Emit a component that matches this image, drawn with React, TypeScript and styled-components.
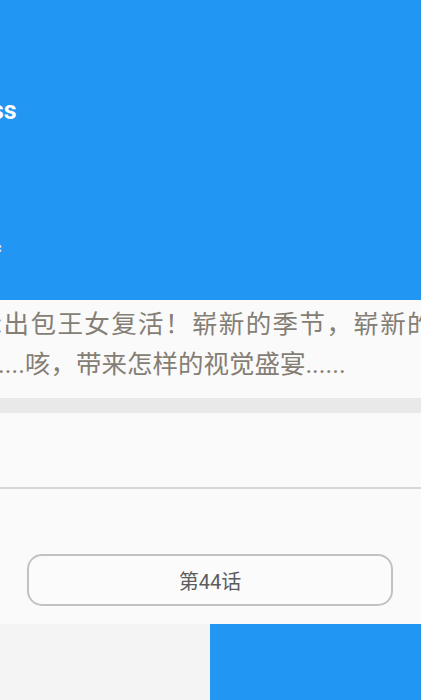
import styled, { createGlobalStyle } from 'styled-components'

const GlobalStyle = createGlobalStyle`
    html, body {
        margin: 0;
        padding: 0;
        background: #fafafa;
    }
    body {
        font-family: Roboto, "Noto Sans CJK SC", "Noto Sans", sans-serif;
    }
`

const Page = styled.div`
    width: 421px;
    height: 700px;
    overflow: hidden;
    display: flex;
    flex-direction: column;
    background: #fafafa;
`

const Header = styled.header`
    height: 300px;
    flex: none;
    background: #2196f3;
    display: flex;
    flex-direction: column;
    padding-top: 94px;
    box-sizing: border-box;
    color: #fff;
`

const Title = styled.div`
    font-size: 25px;
    font-weight: 700;
    line-height: 34px;
    margin-left: -9px;
    white-space: nowrap;
`

const Subtitle = styled.div`
    margin-top: 110px;
    font-size: 16px;
    font-weight: 700;
    margin-left: -7px;
    white-space: nowrap;
`

const Summary = styled.div`
    padding: 4px 0 14px;
    font-family: Roboto, "Noto Sans CJK SC", sans-serif;
    font-size: 25.5px;
    line-height: 40px;
    color: #857e75;
    white-space: nowrap;
`

const SummaryLine = styled.div<{ $shift: number; $spread?: boolean }>`
    margin-left: ${(p) => p.$shift}px;
    letter-spacing: ${(p) => (p.$spread ? '1.4px' : '0')};
`

const GrayBar = styled.div`
    height: 15px;
    flex: none;
    background: #e9e9e9;
`

const Blank = styled.div`
    height: 74px;
    flex: none;
    border-bottom: 2px solid #d6d6d6;
`

const ButtonArea = styled.div`
    padding: 65px 28px 18px 27px;
    flex: none;
`

const ChapterButton = styled.button`
    width: 100%;
    height: 52px;
    box-sizing: border-box;
    border: 2px solid #c2c2c2;
    border-radius: 15px;
    background: #fbfbfb;
    font-family: Roboto, "Noto Sans CJK SC", sans-serif;
    font-size: 20px;
    font-weight: 400;
    color: #5c5c5c;
    display: flex;
    align-items: center;
    justify-content: center;
    padding: 0;
`

const BottomBar = styled.div`
    flex: 1;
    display: grid;
    grid-template-columns: 210px 1fr;
`

const BottomCell = styled.div<{ $active?: boolean }>`
    background: ${(p) => (p.$active ? '#2196f3' : '#f4f4f4')};
`

export default function App() {
    return (
        <>
            <GlobalStyle />
            <Page>
                <Header>
                    <Title>ss</Title>
                    <Subtitle>c</Subtitle>
                </Header>
                <Summary>
                    <SummaryLine $shift={-4} $spread>
                        :出包王女复活！崭新的季节，崭新的
                    </SummaryLine>
                    <SummaryLine $shift={-2}>....咳，带来怎样的视觉盛宴......</SummaryLine>
                </Summary>
                <GrayBar />
                <Blank />
                <ButtonArea>
                    <ChapterButton>第44话</ChapterButton>
                </ButtonArea>
                <BottomBar>
                    <BottomCell />
                    <BottomCell $active />
                </BottomBar>
            </Page>
        </>
    )
}
